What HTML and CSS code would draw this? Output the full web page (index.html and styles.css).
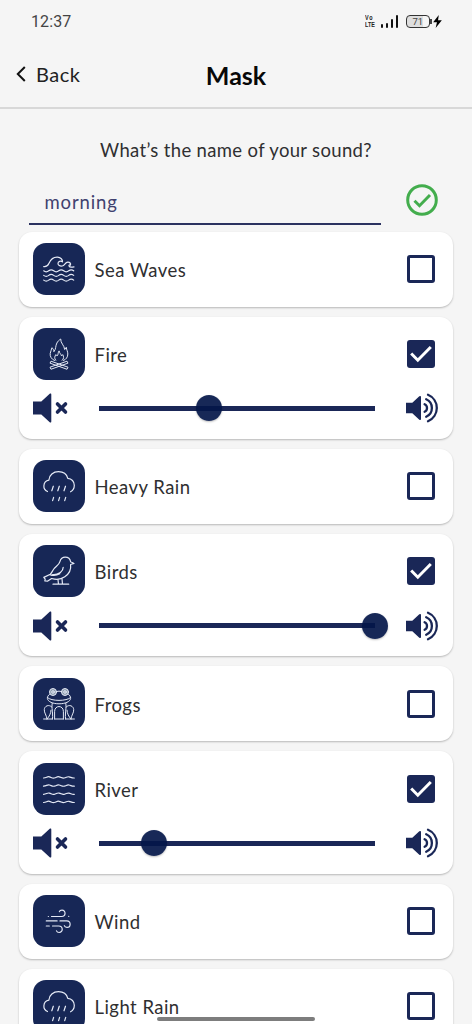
FILE: index.html
```html
<!DOCTYPE html>
<html lang="en">
<head>
<meta charset="utf-8">
<title>Mask</title>
<link rel="stylesheet" href="styles.css">
</head>
<body>
<svg class="defs" width="0" height="0">
  <symbol id="rain" viewBox="0 0 52 52"><path d="M14.5 31.5C11.8 30.2 10.7 28 10.9 25.7c.2-3 2.3-5.2 5-5.6C16 15 20.400 11.700 25.500 11.700c4.600 0 8.200 2.600 9.300 6.600 3.800.3 6.500 3.300 6.500 7 0 2.900-1.300 5.200-3.700 6.500"/><path d="M20.300 26.200l-1.500 4.600M26.300 26.200l-1.500 4.600M32.500 26.200L31 30.800M20.600 37.300l-1 3.300M26.600 37.300l-1 3.300M32.700 37.300l-1 3.300"/></symbol>
  <symbol id="mute" viewBox="0 0 36 30"><path class="solid" d="M0 8.500h8.300L17 .6q1.300-.7 1.300.8v27.200q0 1.500-1.300.8L8.300 21.500H0z"/><path class="cross" d="M24.500 11l8 8m0-8l-8 8"/></symbol>
  <symbol id="loud" viewBox="0 0 34 30"><path class="solid" d="M0 9.800h6.300l7-6.600q1.700-.9 1.700.8v22q0 1.700-1.700.8l-7-6.600H0z"/><path class="sound" d="M18.600 11.200a4.200 4.200 0 0 1 0 7.600M20.200 6.300a9.500 9.500 0 0 1 0 17.400M22 1.800a14.300 14.300 0 0 1 0 26.400"/></symbol>
  <symbol id="tick" viewBox="0 0 28 28"><path d="M4.200 13.500l6.600 6.700L23.800 7"/></symbol>
</svg>

<div class="statusbar">
  <span class="clock">12:37</span>
  <div class="indicators">
    <span class="volte"><span>Vo</span><span>LTE</span></span>
    <span class="signal"><i></i><i></i><i></i><i></i></span>
    <span class="battery">71</span>
    <svg class="bolt" viewBox="0 0 8 12"><path d="M5.200 0L0 6.800h3.500L2.300 12 8 4.900H4.500z"/></svg>
  </div>
</div>

<header class="header">
  <a class="back"><svg viewBox="0 0 10 16"><path d="M8.800 1L1.800 8l7 7"/></svg><span>Back</span></a>
  <h1>Mask</h1>
</header>

<main>
  <p class="question">What’s the name of your sound?</p>
  <div class="name-row">
    <div class="name-field">morning</div>
    <svg class="confirm" viewBox="0 0 32 32"><circle cx="16" cy="16" r="14.300"/><path d="M8.500 16.700l5 5L24 11"/></svg>
  </div>

  <section class="sounds">
    <article class="card">
      <div class="row">
        <svg class="icon" viewBox="0 0 52 52"><path d="M10.700 23.600c2.500.4 4.300-1 5.300-3.300 1.800-4 4.800-6.300 8.500-6.100 3.200.2 5.300 2.500 5 4.700-1.700-1.500-4.500-.4-4.500 1.500 0 2 2 3 4.200 2.600 2.700-.5 2.700-3.700 5.600-3.900 2-.1 3.200 1.500 2.700 3-1-.5-1.800.2-1.500.9.500 1.200 3 1.300 5 .8"/><path d="M10.700 27.800q2.500 2 5 0t5 0 5 0 5 0 5 0 5 0M10.700 32.400q2.500 2 5 0t5 0 5 0 5 0 5 0 5 0M10.700 37.100q2.500 2 5 0t5 0 5 0 5 0 5 0 5 0"/></svg>
        <span class="label">Sea Waves</span><span class="box"></span>
      </div>
    </article>

    <article class="card">
      <div class="row">
        <svg class="icon thin" viewBox="0 0 52 52"><path d="M21.500 32.500c-3-1.300-4.700-4-4.300-7 .3-2 1.300-3.500 1.700-5.800 1.300 1 2 2.300 2 4 2.500-3.200 1.300-5.500 3-8.700.8-1.600 2-2.800 3.800-4-.3 4 3.600 6.300 4 10.500l1.600-2.200c.2 2.700 1.500 4 1.500 6.700 0 3-1.600 5.500-4.300 6.500"/><path d="M22.700 32.300c-1.700-2-1-4 .2-5.700l1.200 1.300c1.400-1.300.7-3.300 2-5 .3 2.300 2 3 2.400 5l1.200-1.300c1.200 2 1.400 4-.5 5.700M17.200 34.800l.8-1.600 17 6-.8 1.700zM34.800 34.800l-.8-1.600-17 6 .8 1.700z"/></svg>
        <span class="label">Fire</span><span class="box on"><svg><use href="#tick"/></svg></span>
      </div>
      <div class="volume"><svg class="mute"><use href="#mute"/></svg><div class="track"><i class="thumb" style="left:40%"></i></div><svg class="loud"><use href="#loud"/></svg></div>
    </article>

    <article class="card">
      <div class="row"><svg class="icon"><use href="#rain"/></svg><span class="label">Heavy Rain</span><span class="box"></span></div>
    </article>

    <article class="card">
      <div class="row">
        <svg class="icon" viewBox="0 0 52 52"><path d="M41 18.400c-1.300-.8-2.300-1.200-3.300-1.400-.5-3-2.700-4.800-5.500-4.800-3 0-4.600 1.900-5.400 4.600-.9 3-3.500 4.200-5.500 6.600-1.600 1.900-2.300 4-4 5.800l-6.500 3.200 1.400 1.800-.4 1.600 3 .3 3.800-2.600c4.700 1.400 9.700.8 13.200-1.700 4.600-3.200 6.400-8 5.800-12.300z"/><path d="M30.200 22.300c-.1 5.200-4.600 7-10.700 7.600M16.800 29.600c3.300 1.300 7.300.7 10-.8M25 34.700l.5 4.500M29 33.800l.5 5.400M20 39.200h15.700"/></svg>
        <span class="label">Birds</span><span class="box on"><svg><use href="#tick"/></svg></span>
      </div>
      <div class="volume"><svg class="mute"><use href="#mute"/></svg><div class="track"><i class="thumb" style="left:100%"></i></div><svg class="loud"><use href="#loud"/></svg></div>
    </article>

    <article class="card">
      <div class="row">
        <svg class="icon thin" viewBox="0 0 52 52"><g class="eyes"><circle cx="20" cy="14" r="3.500"/><circle cx="32" cy="14" r="3.500"/><circle cx="20" cy="14" r="1.300"/><circle cx="32" cy="14" r="1.300"/></g><path d="M16.600 16.200c-1.600 1.200-2.400 2.800-2.200 4.300.4 3.200 5.500 5.300 11.600 5.300s11.200-2.100 11.600-5.300c.2-1.500-.6-3.100-2.200-4.300M23.300 13.500q2.700-.8 5.400 0M14.500 19.600c3.500 3.800 19.500 3.800 23 0M19.200 25.400c-.8 5 .8 7.500.3 15.600M32.800 25.400c.8 5-.8 7.500-.3 15.600"/><path d="M18.800 29c-3-3.100-7.300-1-7.500 2.600-.2 3.300 2 5 2.800 9.400M33.200 29c3-3.100 7.300-1 7.500 2.600.2 3.300-2 5-2.800 9.400M14 41c2.300-2.300 4-5.700 4-8.800M38 41c-2.300-2.300-4-5.700-4-8.800M21.600 41v-7.500c0-6.600 8.800-6.600 8.800 0V41M10.600 41h8.900M21.600 41h8.800M32.500 41h8.900"/></svg>
        <span class="label">Frogs</span><span class="box"></span>
      </div>
    </article>

    <article class="card">
      <div class="row">
        <svg class="icon" viewBox="0 0 52 52"><path d="M10.500 15c3.200-.2 3.600-1.800 5.900-1.200 2 .5 2.400 1.500 4.800 1.200 2.400-.3 2.500-1.700 4.900-1.200 2.400.5 2.600 1.500 5 1.200 2.400-.3 2.600-1.600 4.900-1.200 2 .4 2.800 1.400 5.300 1.200M10.500 23.200c3.200-.2 3.600-1.800 5.900-1.200 2 .5 2.400 1.500 4.800 1.200 2.400-.3 2.500-1.700 4.900-1.200 2.400.5 2.600 1.500 5 1.200 2.400-.3 2.600-1.600 4.900-1.200 2 .4 2.800 1.400 5.300 1.200M10.500 31.300c3.200-.2 3.600-1.800 5.900-1.200 2 .5 2.400 1.500 4.800 1.200 2.400-.3 2.500-1.700 4.900-1.200 2.400.5 2.600 1.500 5 1.200 2.400-.3 2.600-1.600 4.900-1.200 2 .4 2.800 1.400 5.300 1.200M10.500 39.500c3.200-.2 3.600-1.800 5.900-1.200 2 .5 2.400 1.500 4.800 1.200 2.400-.3 2.500-1.700 4.900-1.200 2.400.5 2.600 1.500 5 1.200 2.400-.3 2.600-1.600 4.900-1.200 2 .4 2.800 1.400 5.300 1.200"/></svg>
        <span class="label">River</span><span class="box on"><svg><use href="#tick"/></svg></span>
      </div>
      <div class="volume"><svg class="mute"><use href="#mute"/></svg><div class="track"><i class="thumb" style="left:20%"></i></div><svg class="loud"><use href="#loud"/></svg></div>
    </article>

    <article class="card">
      <div class="row">
        <svg class="icon" viewBox="0 0 52 52"><path d="M18.500 21.500h10.200c4.500 0 4.300-6.300.3-6.300-1.400 0-2.300.5-2.600 1.500M13.300 25.900h10.800M27 25.900h6.800c4.600 0 4.200 6.500.2 6.500-1.500 0-2.400-.7-2.700-1.700M13.300 31h3M19.500 31h6.300c4.600 0 4.400 6.500.4 6.500-1.400 0-2.300-.6-2.700-1.600M15.300 21.500h.1M35.700 21.300h.1"/></svg>
        <span class="label">Wind</span><span class="box"></span>
      </div>
    </article>

    <article class="card">
      <div class="row"><svg class="icon"><use href="#rain"/></svg><span class="label">Light Rain</span><span class="box"></span></div>
    </article>
  </section>
</main>
<div class="home-bar"></div>
</body>
</html>
```

FILE: styles.css
```css
* { box-sizing: border-box; }
html, body { margin: 0; height: 1024px; overflow: hidden; }
body {
  position: relative;
  background: #f5f5f5;
  color: #2f2f31;
  font-family: Lato, sans-serif;
  font-size: 17px;
}
svg { display: block; fill: none; stroke-linecap: round; stroke-linejoin: round; }
.defs { position: absolute; }

.statusbar {
  height: 42px;
  padding: 0 30px 0 31px;
  display: flex;
  align-items: center;
  justify-content: space-between;
}
.clock { font: 16px Roboto, sans-serif; color: #444; letter-spacing: .1px; }
.indicators { display: flex; align-items: center; }
.volte {
  display: flex;
  flex-direction: column;
  width: 10px;
  margin-right: 6px;
  font: bold 8px/7px "Liberation Sans", sans-serif;
  color: #222;
  transform: scaleX(.68);
  transform-origin: left;
}
.volte span:first-child { letter-spacing: 1.500px; }
.signal { display: flex; align-items: flex-end; gap: 2.600px; height: 13px; margin-right: 8px; }
.signal i { width: 2.300px; height: 3.500px; background: #111; border-radius: 1px; }
.signal i:nth-child(2) { height: 5px; }
.signal i:nth-child(3) { height: 8.500px; }
.signal i:nth-child(4) { height: 13px; }
.battery {
  position: relative;
  width: 23.500px;
  height: 13px;
  border: 1px solid #333;
  border-radius: 4px;
  background: linear-gradient(90deg, #dedede 71%, transparent 71%);
  font: 9.500px/11px Roboto, sans-serif;
  color: #444;
  text-align: center;
}
.battery::after {
  content: "";
  position: absolute;
  right: -3px;
  top: 3px;
  width: 1.500px;
  height: 5px;
  background: #444;
}
.bolt { width: 9px; height: 13px; margin-left: 3.500px; fill: #000; }

.header {
  display: grid;
  grid-template-columns: 1fr auto 1fr;
  align-items: center;
  height: 66.500px;
  padding: 0 16px;
  border-bottom: 2px solid #d8d8d8;
}
.back { display: flex; align-items: center; gap: 10px; font-size: 20px; letter-spacing: .5px; color: #222; }
.back svg { width: 10px; height: 16px; stroke: #111; stroke-width: 2; stroke-linecap: butt; stroke-linejoin: miter; }
h1 { margin: 2px 0 0; font-size: 25px; line-height: 30px; font-weight: 700; color: #080808; }

.question { margin: 29.500px 0 0; text-align: center; font-size: 18.500px; line-height: 24px; letter-spacing: .34px; }
.name-row { display: flex; justify-content: space-between; height: 69.500px; padding: 19px 34px 0 29px; }
.name-field {
  width: 352px;
  height: 44px;
  padding: 9px 16px 9px 15.500px;
  border-bottom: 2px solid #2b3260;
  color: #40416f;
  font-size: 18.500px;
  line-height: 24px;
  letter-spacing: .85px;
}
.confirm { width: 32px; height: 32px; margin-top: 2.500px; stroke: #43ad4d; stroke-width: 3; stroke-linecap: butt; stroke-linejoin: miter; }

.sounds { display: flex; flex-direction: column; gap: 10px; padding: .2px 19px 0; }
.card {
  padding: 11.300px 18px 11.700px 14px;
  background: #fff;
  border-radius: 13px;
  box-shadow: 0 1px 2px rgba(0, 0, 0, .25);
}
.row { display: flex; align-items: center; height: 52px; }
.icon {
  width: 52px;
  height: 52px;
  border-radius: 13px;
  background: #172756;
  stroke: #e4e9f5;
  stroke-width: 1.200;
}
.icon.thin { stroke-width: 1; }
.eyes { fill: #8b9cac; }
.label { flex: 1; padding: 2px 0 0 9.500px; font-size: 18.500px; letter-spacing: .46px; }
.box { width: 28px; height: 28px; border: 3px solid #1a2757; border-radius: 3px; }
.box.on { border: 0; background: #1a2757; }
.box svg { width: 28px; height: 28px; stroke: #fff; stroke-width: 3; stroke-linecap: butt; stroke-linejoin: miter; }

.volume { display: flex; align-items: center; height: 30px; margin: 13.500px -5px 3.900px 0; }
.mute { width: 36px; height: 30px; }
.loud { width: 34px; height: 30px; }
.solid { fill: #1a2757; }
.cross { stroke: #1a2757; stroke-width: 3.600; }
.sound { stroke: #1a2757; stroke-width: 2.300; }
.track { position: relative; flex: 1; height: 5px; margin: 0 31px 0 30px; background: #1a2757; }
.thumb {
  position: absolute;
  top: -10.500px;
  width: 26px;
  height: 26px;
  margin-left: -13px;
  border-radius: 50%;
  background: rgba(3, 22, 73, .92);
  box-shadow: 0 1px 2px rgba(0, 0, 0, .25);
}
.home-bar {
  position: absolute;
  left: 157px;
  top: 1017px;
  width: 158px;
  height: 4px;
  border-radius: 2px;
  background: #7d7d7d;
}
```
